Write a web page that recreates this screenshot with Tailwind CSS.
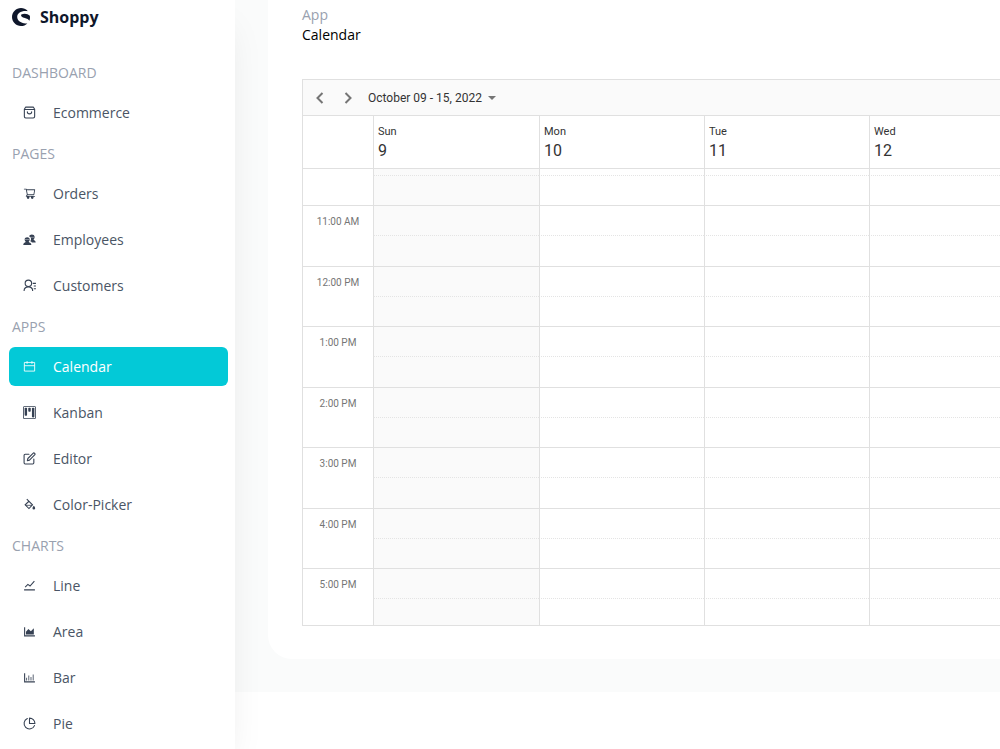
<!DOCTYPE html>
<html lang="en">
<head>
    <meta charset="UTF-8">
    <meta name="viewport" content="width=device-width, initial-scale=1.0">
    <title>Shoppy - Calendar</title>
    <script src="https://cdn.jsdelivr.net/npm/@tailwindcss/browser@4"></script>
</head>
<body class="flex h-screen overflow-hidden bg-white font-['Open_Sans',sans-serif] text-sm">
    <!-- Sidebar -->
    <aside class="relative z-10 w-[235px] shrink-0 overflow-y-clip bg-white pl-[9px] pr-[7px] shadow-[0_20px_36px_-10px_rgba(0,0,0,0.1)]">
        <a href="#" class="flex items-center gap-2.5 pt-1 pl-[3px] text-base leading-[26px] font-bold text-slate-900">
            <svg class="size-[18px]" viewBox="0 0 24 24" fill="currentColor">
                <path d="M20.500 3.200C18.300 1.200 15.500 0 12 0 5.400 0 0 5.400 0 12s5.400 12 12 12c3.300 0 6.300-1.300 8.500-3.500C14 20.500 7.500 18 7 12.500 6.500 7 12 3.500 20.500 4.200z"/>
                <path d="M12.500 8.500c4-1.800 8.800-.8 11.300 1.800.4 2.400.2 4.700-.6 6.700-1.800-3.500-6.900-3.200-9.600-5-1.400-1-2-2.700-1.100-3.500z"/>
            </svg>
            <span>Shoppy</span>
        </a>
        <nav class="pt-[33px] text-gray-600" id="menu"></nav>
    </aside>

    <!-- Page content -->
    <main class="min-w-0 flex-1">
        <div class="bg-[#fafbfb] pb-[33px] pl-[33px]">
            <section class="rounded-bl-3xl bg-white pb-[33px] pl-[34px]">
                <header class="pt-[5px] pb-[34px]">
                    <p class="leading-5 text-gray-400">App</p>
                    <h1 class="leading-5 text-black">Calendar</h1>
                </header>

                <div class="border-y border-l border-[#e0e0e0] font-[Roboto,sans-serif]">
                    <div class="flex h-9 items-center border-b border-[#e0e0e0] bg-[#fafafa] text-[#333]">
                        <button class="flex h-7 w-7 ml-[3px] items-center justify-center text-[#757575]" aria-label="Previous week">
                            <svg class="h-3 w-3" viewBox="0 0 12 12" fill="none" stroke="currentColor" stroke-width="2"><path d="M8.500 1 3.500 6l5 5"/></svg>
                        </button>
                        <button class="flex h-7 w-7 items-center justify-center text-[#757575]" aria-label="Next week">
                            <svg class="h-3 w-3" viewBox="0 0 12 12" fill="none" stroke="currentColor" stroke-width="2"><path d="m3.500 1 5 5-5 5"/></svg>
                        </button>
                        <button class="ml-1.5 flex items-center gap-1.5 text-xs">
                            October 09 - 15, 2022
                            <svg class="h-1 w-2 text-[#757575]" viewBox="0 0 8 4" fill="currentColor"><path d="M0 0h8L4 4z"/></svg>
                        </button>
                    </div>
                    <table class="w-full table-fixed border-separate border-spacing-0">
                        <colgroup>
                            <col class="w-[70px]">
                            <col class="w-[166px]">
                            <col class="w-[165px]">
                            <col class="w-[165px]">
                            <col>
                        </colgroup>
                        <thead>
                            <tr class="h-[53px] text-left align-top text-[11px] text-[#333]" id="days">
                                <td class="border-b border-[#e0e0e0]"></td>
                            </tr>
                        </thead>
                        <tbody id="slots"></tbody>
                    </table>
                </div>
            </section>
        </div>
    </main>

    <script>
        const outline = 'fill="none" stroke="currentColor" stroke-width="2" stroke-linecap="round" stroke-linejoin="round"';
        const icons = {
            Ecommerce: `<svg class="size-[13px]" viewBox="0 0 24 24" ${outline}><path d="M5 2h14l2.500 4v13.500a2.500 2.500 0 0 1-2.500 2.500H5a2.500 2.500 0 0 1-2.500-2.500V6zM2.500 6.500h19M8 10.500a4 4 0 0 0 8 0"/></svg>`,
            Orders: `<svg class="size-[13px]" viewBox="0 0 1024 1024" fill="currentColor"><path d="M922.900 701.900H327.400l29.900-60.900 496.800-.9c16.800 0 31.200-12 34.200-28.600l68.800-385.100c1.800-10.100-.9-20.500-7.500-28.400a34.990 34.990 0 0 0-26.600-12.500l-632-2.100-5.400-25.400c-3.400-16.200-18-28-34.600-28H96.500a35.300 35.300 0 1 0 0 70.600h125.900L246 312.800l58.100 281.300-74.800 122.100a34.960 34.960 0 0 0-3 36.800c6 11.900 18.100 19.400 31.500 19.400h62.800a102.430 102.430 0 0 0-20.600 61.700c0 56.600 46 102.600 102.600 102.600s102.600-46 102.600-102.600c0-22.300-7.400-44-20.600-61.700h161.100a102.430 102.430 0 0 0-20.600 61.700c0 56.600 46 102.600 102.600 102.600s102.600-46 102.600-102.600c0-22.300-7.400-44-20.600-61.700H923c19.400 0 35.300-15.800 35.300-35.300a35.420 35.420 0 0 0-35.400-35.200zM305.700 253l575.800 1.900-56.400 315.800-452.300.8L305.700 253z"/></svg>`,
            Employees: `<svg class="size-[13px]" viewBox="0 0 24 24" fill="currentColor"><path d="M11.500 6.500C12 1.500 21.500 1.500 21.500 7.500c0 2-.8 3.500-2 4.500 0 1.500 4 1.500 4 5.500h-7c-.5-1-1.500-1.800-3-2.300 2.500-3.200 1.800-7.200-2-8.700z"/><path d="M3 11.500c0-5 9.500-5 9.500 0 0 2-.8 3.500-2 4.500 0 1.800 5 1.300 5 6H.5c0-4.700 4.500-4.200 4.500-6-1.200-1-2-2.500-2-4.500z"/><path d="M3.500 12h8.500M13.500 8h7" stroke="#fff" stroke-width=".7"/></svg>`,
            Customers: `<svg class="h-[13px] w-[14px]" viewBox="0 0 26 24" fill="none" stroke="currentColor" stroke-width="2"><circle cx="10" cy="8" r="6"/><path d="M2 22c0-10 16-10 16 0M18 8h6M20 13h4M20 18h4"/></svg>`,
            Calendar: `<svg class="size-[13px]" viewBox="0 0 24 24" fill="none" stroke="currentColor" stroke-width="1.600"><path d="M2.500 4.500h19v16h-19zM2.500 10.500h19M7.500 2v5M16.500 2v5"/></svg>`,
            Kanban: `<svg class="size-[13px]" viewBox="0 0 16 16" fill="currentColor"><path fill-rule="evenodd" d="M2 0a2 2 0 0 0-2 2v12a2 2 0 0 0 2 2h12a2 2 0 0 0 2-2V2a2 2 0 0 0-2-2zm0 1h12a1 1 0 0 1 1 1v12a1 1 0 0 1-1 1H2a1 1 0 0 1-1-1V2a1 1 0 0 1 1-1z"/><rect x="2" y="2" width="3" height="10" rx="1"/><rect x="6.500" y="2" width="3" height="5" rx="1"/><rect x="11" y="2" width="3" height="12" rx="1"/></svg>`,
            Editor: `<svg class="size-[13px]" viewBox="0 0 24 24" ${outline}><path d="M11 4H4a2 2 0 0 0-2 2v14a2 2 0 0 0 2 2h14a2 2 0 0 0 2-2v-7"/><path d="M18.500 2.500a2.121 2.121 0 0 1 3 3L12 15l-4 1 1-4z"/></svg>`,
            'Color-Picker': `<svg class="size-[13px]" viewBox="0 0 24 24" fill="none" stroke="currentColor" stroke-width="2"><path d="m7 2 10.500 10.500-6.500 7-7-7L11 6"/><path d="M5 13.500h12" stroke-width="1.500"/><path d="M20 14.500s-2.500 2.700-2.500 4.200a2.500 2.500 0 0 0 5 0c0-1.500-2.500-4.200-2.500-4.200z" fill="currentColor" stroke="none"/></svg>`,
            Line: `<svg class="size-[13px]" viewBox="0 0 24 24" fill="none" stroke="currentColor" stroke-width="2"><path d="M2 20h20M4 15l5-5 4 3 8-9"/></svg>`,
            Area: `<svg class="size-[13px]" viewBox="0 0 24 24" fill="currentColor"><path d="M2 4h2v15h18v2H2z"/><path d="M5.500 17.500v-5L10 7.500l4.500 4 5.500-5.500v11.500z"/></svg>`,
            Bar: `<svg class="size-[13px]" viewBox="0 0 24 24" fill="currentColor"><path d="M2 4h2v15h18v2H2zM6 12.500h1.500v5H6zM10 8.500h1.500v9H10zM14 11h1.500v6.500H14zM18 6.500h1.500v11H18z"/></svg>`,
            Pie: `<svg class="size-[13px]" viewBox="0 0 24 24" ${outline}><path d="M21.210 15.890A10 10 0 1 1 8 2.830"/><path d="M22 12A10 10 0 0 0 12 2v10z"/></svg>`,
        };

        const sections = [
            ['DASHBOARD', ['Ecommerce']],
            ['PAGES', ['Orders', 'Employees', 'Customers']],
            ['APPS', ['Calendar', 'Kanban', 'Editor', 'Color-Picker']],
            ['CHARTS', ['Line', 'Area', 'Bar', 'Pie']],
        ];

        document.getElementById('menu').innerHTML = sections.map(([title, links]) => `
            <p class="mb-2.5 pl-[3px] leading-5 text-gray-400">${title}</p>
            <ul class="mb-3 flex flex-col gap-[7px]">
                ${links.map(name => `
                    <li>
                        <a href="#" class="flex h-[39px] items-center rounded-md pl-3.5 ${name === 'Calendar' ? 'bg-[#03c9d7] text-white' : 'hover:bg-gray-100'}">
                            <span class="flex w-[30px] shrink-0 ${name === 'Calendar' ? 'text-white' : 'text-gray-700'}">${icons[name]}</span>${name}
                        </a>
                    </li>`).join('')}
            </ul>`).join('');

        const days = [['Sun', 9], ['Mon', 10], ['Tue', 11], ['Wed', 12]];
        document.getElementById('days').innerHTML += days.map(([day, date]) => `
            <th class="border-b border-l border-[#e0e0e0] pt-2 pl-1 font-normal">
                <div class="leading-4">${day}</div>
                <div class="text-base leading-[22px]">${date}</div>
            </th>`).join('');

        const hours = ['', '11:00 AM', '12:00 PM', '1:00 PM', '2:00 PM', '3:00 PM', '4:00 PM', '5:00 PM'];
        const cells = line => days.map((_, i) =>
            `<td class="border-l border-l-[#e0e0e0] ${line} ${i === 0 ? 'bg-[#fafafa]' : ''}"></td>`).join('');
        document.getElementById('slots').innerHTML = hours.map((hour, i) => {
            const last = i === hours.length - 1;
            const upper = i === 0 ? 'h-[7px]' : 'h-[30px]';
            const lower = last ? 'h-[26px]' : i === 0 || i % 2 === 0 ? 'h-[30px]' : 'h-[31px]';
            return `
                <tr class="${upper}">
                    <td rowspan="2" class="pt-2 text-center align-top text-[10px] leading-4 text-[#757575] ${last ? '' : 'border-b border-[#e0e0e0]'}">${hour}</td>
                    ${cells('border-b border-b-[#e4e4e4] [border-bottom-style:dotted]')}
                </tr>
                <tr class="${lower}">${cells(last ? '' : 'border-b border-b-[#e0e0e0]')}</tr>`;
        }).join('');
    </script>
</body>
</html>
